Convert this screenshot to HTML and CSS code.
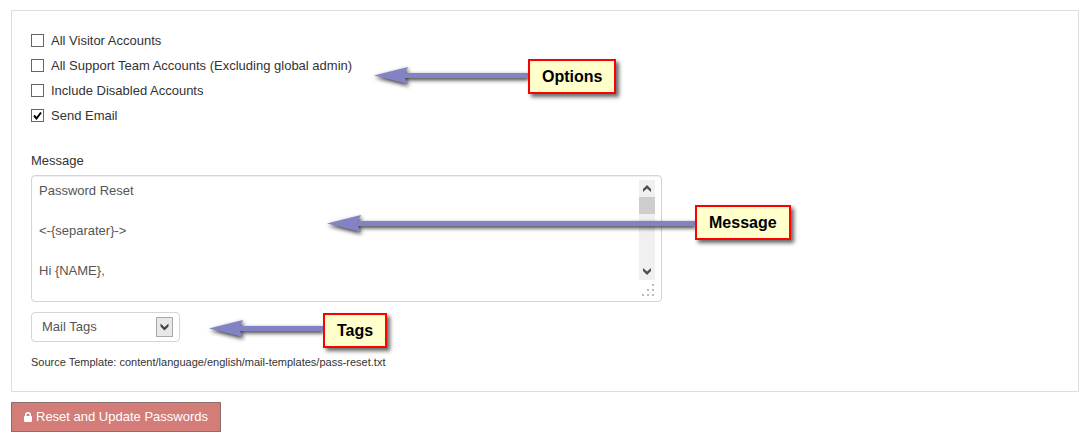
FILE: index.html
```html
<!DOCTYPE html>
<html lang="en">
<head>
<meta charset="utf-8">
<title>Reset Passwords</title>
<link rel="stylesheet" href="styles.css">
</head>
<body>
<form class="page">
  <section class="panel">
    <div class="options">
      <label class="option"><input type="checkbox" class="check">All Visitor Accounts</label>
      <label class="option"><input type="checkbox" class="check">All Support Team Accounts (Excluding global admin)</label>
      <label class="option"><input type="checkbox" class="check">Include Disabled Accounts</label>
      <label class="option"><input type="checkbox" class="check" checked>Send Email</label>
    </div>
    <label class="field-label" for="message">Message</label>
    <div class="editor">
      <textarea id="message" class="message">Password Reset

&lt;-{separater}-&gt;

Hi {NAME},</textarea>
      <div class="scrollbar" aria-hidden="true">
        <svg class="scroll-arrow" viewBox="0 0 16 17"><path d="M4 12V9L8 5L12 9V12L8 8.500Z"/></svg>
        <div class="thumb"></div>
        <svg class="scroll-arrow scroll-down" viewBox="0 0 16 17"><path d="M4 5V8L8 12L12 8V5L8 8.500Z"/></svg>
      </div>
      <svg class="grip" viewBox="0 0 12 12" aria-hidden="true"><path d="M10 0h2v2h-2zM5 5h2v2h-2zM10 5h2v2h-2zM0 10h2v2h-2zM5 10h2v2h-2zM10 10h2v2h-2z"/></svg>
    </div>
    <div class="tags">
      <select class="select" aria-label="Mail Tags"><option>Mail Tags</option></select>
      <svg class="select-arrow" viewBox="0 0 17 20" aria-hidden="true"><rect x=".5" y=".5" width="16" height="19"/><path d="M4.500 6.500V9.500L8.500 13.500L12.500 9.500V6.500L8.500 10.200Z"/></svg>
    </div>
    <p class="source">Source Template: content/language/english/mail-templates/pass-reset.txt</p>
  </section>
  <button type="button" class="submit">
    <svg class="lock" viewBox="0 0 8 10" aria-hidden="true"><path fill-rule="evenodd" d="M0 5Q0 4 1 4V3A3 3 0 0 1 7 3V4Q8 4 8 5V9Q8 10 7 10H1Q0 10 0 9ZM2.500 4H5.500V3A1.500 1.500 0 0 0 2.500 3Z"/></svg>
    Reset and Update Passwords
  </button>

  <div class="callout callout-options">
    <svg class="arrow" width="154" height="17"><path d="M0 8.500L34 0L31 6H154V11H31L34 17Z"/></svg>
    <span class="note">Options</span>
  </div>
  <div class="callout callout-message">
    <svg class="arrow" width="368" height="17"><path d="M0 8.500L34 0L31 6H368V11H31L34 17Z"/></svg>
    <span class="note">Message</span>
  </div>
  <div class="callout callout-tags">
    <svg class="arrow" width="114" height="17"><path d="M0 8.500L34 0L31 6H114V11H31L34 17Z"/></svg>
    <span class="note">Tags</span>
  </div>
</form>
</body>
</html>
```
FILE: styles.css
```css
* {
  box-sizing: border-box;
}

body {
  margin: 0;
  background: #fff;
  color: #333;
  font: 13px/20px "Liberation Sans", Arial, sans-serif;
}

.page {
  position: relative;
  padding: 10px 12px 8px 11px;
}

.panel {
  padding: 20px 19px 19px;
  border: 1px solid #ddd;
}

.options {
  display: flex;
  flex-direction: column;
  align-items: flex-start;
  gap: 5px;
}

.option {
  display: flex;
  align-items: center;
  gap: 7px;
}

.check {
  appearance: none;
  width: 13px;
  height: 13px;
  margin: 0 0 1px;
  border: 1px solid #666;
  background: #fff;
}

.check:checked {
  background: #fff url("data:image/svg+xml,%3Csvg xmlns='http://www.w3.org/2000/svg' viewBox='0 0 11 11'%3E%3Cpath d='M2 5.500L4.500 8.500L9 2.500' fill='none' stroke='%23000' stroke-width='2'/%3E%3C/svg%3E");
}

.field-label {
  display: block;
  margin: 25px 0 4px;
}

.editor {
  position: relative;
  width: 631px;
  max-width: 100%;
}

.message {
  display: block;
  width: 100%;
  height: 127px;
  padding: 5px 28px 4px 7px;
  overflow: hidden;
  resize: none;
  border: 1px solid #d5d5d5;
  border-radius: 4px;
  background: #fff;
  box-shadow: inset 0 1px 1px #eee;
  color: #555;
  font: inherit;
}

.scrollbar {
  position: absolute;
  top: 5px;
  right: 7px;
  display: flex;
  flex-direction: column;
  width: 16px;
  height: 100px;
  background: #f0f0f0;
}

.scroll-arrow {
  width: 16px;
  height: 17px;
  fill: #505050;
}

.thumb {
  height: 17px;
  background: #cdcdcd;
}

.scroll-down {
  margin-top: auto;
}

.grip {
  position: absolute;
  right: 8px;
  bottom: 6px;
  width: 12px;
  height: 12px;
  fill: #bbb;
}

.tags {
  position: relative;
  width: 149px;
  margin-top: 10px;
}

.select {
  appearance: none;
  display: block;
  width: 100%;
  height: 30px;
  padding: 0 30px 0 10px;
  border: 1px solid #d5d5d5;
  border-radius: 4px;
  background: #fff;
  color: #555;
  font: inherit;
}

.select-arrow {
  position: absolute;
  top: 5px;
  right: 7px;
  width: 17px;
  height: 20px;
  fill: #444;
  pointer-events: none;
}

.select-arrow rect {
  fill: #e8e8e8;
  stroke: #aaa;
}

.source {
  margin: 10px 0 0;
  font-size: 11px;
}

.submit {
  display: flex;
  align-items: center;
  gap: 4px;
  height: 30px;
  margin-top: 10px;
  padding: 0 12px;
  border: 1px solid #887070;
  background: #d47c78;
  color: #fff;
  font: inherit;
}

.lock {
  width: 8px;
  height: 10px;
  fill: #fff;
}

.callout {
  position: absolute;
  display: flex;
  align-items: flex-start;
  pointer-events: none;
}

.callout-options {
  top: 59px;
  left: 374px;
}

.callout-message {
  top: 205px;
  left: 327px;
}

.callout-tags {
  top: 313px;
  left: 209px;
}

.arrow {
  overflow: visible;
  margin-top: 8px;
  fill: #8282c4;
  filter: drop-shadow(1px 2px 2px rgba(0, 0, 0, .8));
}

.callout-message .arrow {
  margin-top: 10px;
}

.callout-tags .arrow {
  margin-top: 7px;
}

.note {
  z-index: 1;
  padding: 6px 12px 5px;
  border: 2px solid #f00;
  background: #ffc;
  box-shadow: 3px 3px 4px rgba(0, 0, 0, .6);
  color: #000;
  font-size: 16px;
  font-weight: bold;
}
```
